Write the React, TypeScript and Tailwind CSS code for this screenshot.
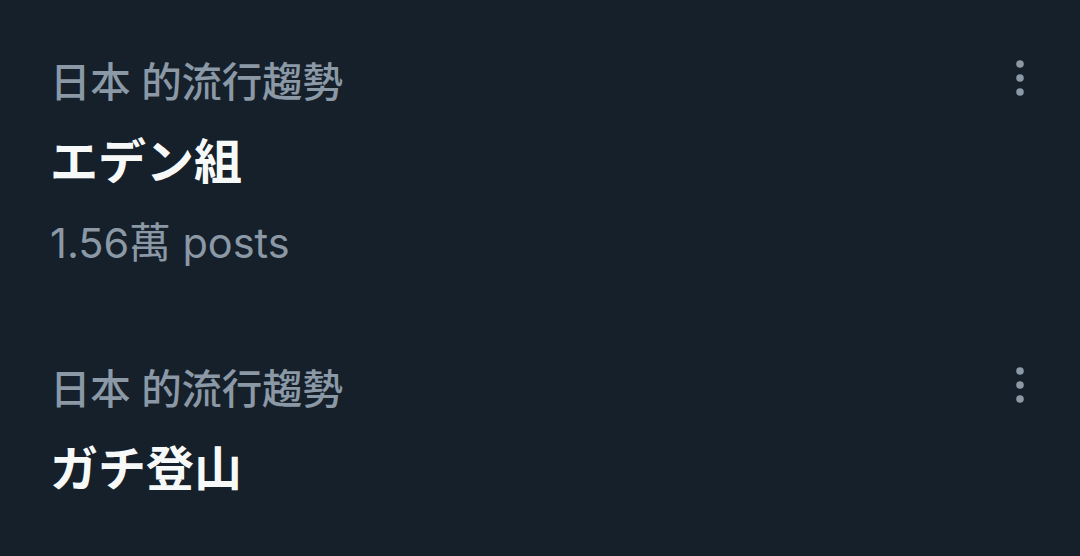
const trends = [
  { label: "日本 的流行趨勢", title: "エデン組", posts: "1.56萬 posts" },
  { label: "日本 的流行趨勢", title: "ガチ登山" },
];

function MoreIcon() {
  return (
    <svg width="20" height="40" viewBox="0 0 20 40" className="-mt-px shrink-0 fill-[#8b98a5]">
      <circle cx="10" cy="6" r="3.8" />
      <circle cx="10" cy="20" r="3.8" />
      <circle cx="10" cy="34" r="3.8" />
    </svg>
  );
}

export default function App() {
  return (
    <div
      className="flex h-[556px] w-[1080px] flex-col gap-[99px] overflow-hidden bg-[#15202b] pl-[50px] pr-[50px] pt-[59px]"
      style={{ fontFamily: 'Inter, "Noto Sans CJK TC", "Noto Sans CJK JP", sans-serif' }}
    >
      {trends.map((t, i) => (
        <div key={i} className="flex items-start justify-between">
          <div className="flex flex-col">
            <span className="h-[48px] text-[40.5px] font-medium leading-[48px] tracking-[-0.2px] text-[#8b98a5]">
              {t.label}
            </span>
            <span
              className="mt-[24px] h-[62px] text-[48px] font-bold leading-[62px] text-[#f7f9f9]"
              style={{ fontFamily: 'Inter, "Noto Sans CJK JP", sans-serif' }}
            >
              {t.title}
            </span>
            {t.posts && (
              <span className="mt-[26px] h-[48px] text-[41.5px] leading-[48px] text-[#8b98a5]">{t.posts}</span>
            )}
          </div>
          <MoreIcon />
        </div>
      ))}
    </div>
  );
}
